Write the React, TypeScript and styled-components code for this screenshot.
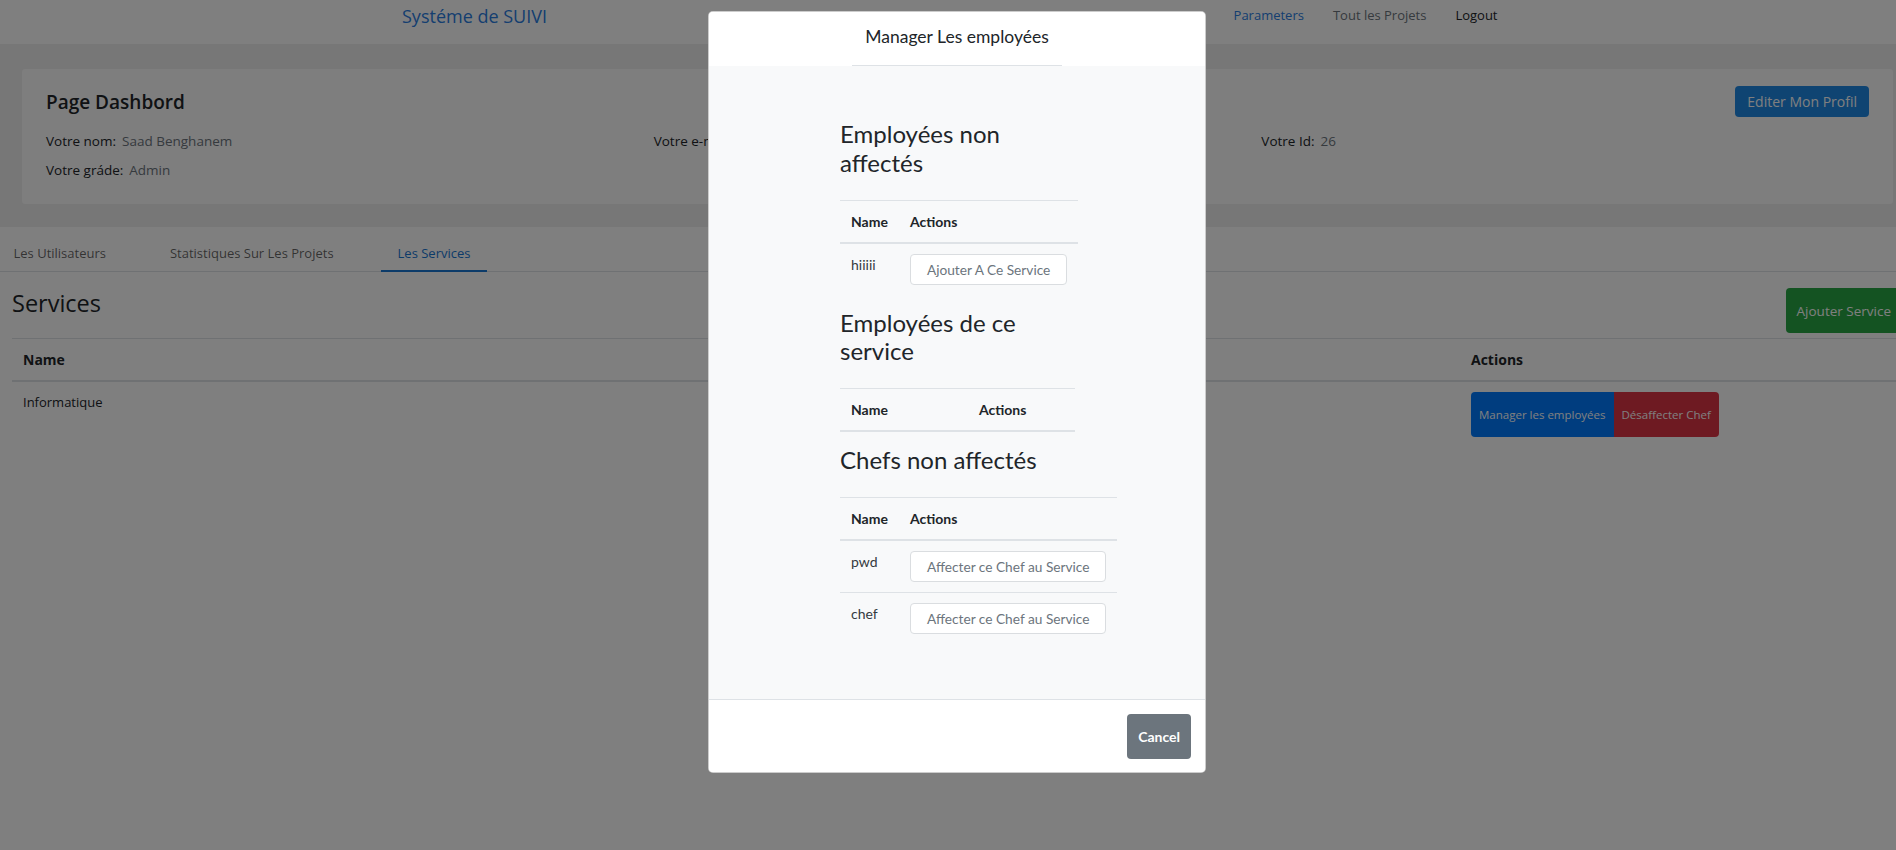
import styled, { createGlobalStyle } from "styled-components";

const GlobalStyle = createGlobalStyle`
  * { box-sizing: border-box; }
  html, body {
    margin: 0;
    padding: 0;
    overflow: hidden;
    background: #fff;
  }
  body {
    font-family: "Open Sans", "Noto Sans", sans-serif;
    color: #212529;
  }
`;

const Page = styled.div`
  width: 1914px;
  min-height: 850px;
  background: #fff;
`;

/* ---------- navbar ---------- */

const Navbar = styled.nav`
  height: 44px;
  background: #fff;
`;

const NavInner = styled.div`
  width: 1110px;
  margin: 0 auto;
  padding-top: 3px;
  display: flex;
  justify-content: space-between;
  align-items: flex-start;
`;

const Brand = styled.a`
  font-size: 18px;
  line-height: 26px;
  color: #2a7de1;
  text-decoration: none;
`;

const NavLinks = styled.div`
  display: flex;
`;

const NavLink = styled.a<{ $tone: "active" | "muted" | "dark" }>`
  padding: 0 14.5px;
  font-size: 13px;
  line-height: 24px;
  text-decoration: none;
  color: ${({ $tone }) =>
    $tone === "active" ? "#2a7de1" : $tone === "muted" ? "#6c757d" : "#212529"};
`;

/* ---------- profile card ---------- */

const Band = styled.section`
  background: #eeeeee;
  padding: 25px 21px 23px 22px;
`;

const Card = styled.div`
  background: #fcfcfc;
  border-radius: 3px;
  padding: 17px 24px 22px;
`;

const CardHeader = styled.div`
  height: 31px;
  display: flex;
  justify-content: space-between;
  align-items: center;
`;

const CardTitle = styled.h1`
  margin: 0;
  font-size: 19px;
  font-weight: 600;
  color: #212529;
`;

const ProfileButton = styled.button`
  height: 31px;
  padding: 0 12px;
  border: none;
  border-radius: 4px;
  background: #1e88e5;
  color: #fff;
  font-family: inherit;
  font-size: 14px;
`;

const InfoGrid = styled.div`
  margin-top: 12px;
  display: grid;
  grid-template-columns: repeat(3, 1fr);
  row-gap: 5px;
  font-size: 13.5px;
  line-height: 24px;
`;

const InfoLabel = styled.span`
  color: #212529;
`;

const InfoValue = styled.span`
  margin-left: 6px;
  color: #6c757d;
`;

/* ---------- tabs ---------- */

const TabList = styled.div`
  border-bottom: 1px solid #dee2e6;
`;

const TabRow = styled.div`
  display: flex;
  gap: 31px;
  margin-left: -3px;
`;

const Tab = styled.button<{ $active?: boolean }>`
  margin-bottom: -1px;
  padding: 16px 16.5px 7px;
  border: none;
  border-bottom: 2px solid ${({ $active }) => ($active ? "#1976d2" : "transparent")};
  background: none;
  font-family: inherit;
  font-size: 13px;
  line-height: 20px;
  color: ${({ $active }) => ($active ? "#1976d2" : "rgba(0,0,0,0.62)")};
`;

/* ---------- services ---------- */

const ServicesSection = styled.section`
  padding: 16px 12px 0;
`;

const SectionHead = styled.div`
  display: flex;
  justify-content: space-between;
  align-items: flex-start;
`;

const SectionTitle = styled.h2`
  margin: 0;
  font-size: 23.5px;
  font-weight: 400;
  line-height: 30px;
  color: #212529;
`;

const AddButton = styled.button`
  height: 45px;
  padding: 0 11px;
  border: none;
  border-radius: 4px;
  background: #28a745;
  color: #fff;
  font-family: inherit;
  font-size: 13.5px;
  white-space: nowrap;
`;

const DataTable = styled.table`
  width: 100%;
  margin-top: 5px;
  border-collapse: collapse;
  font-size: 13px;
`;

const HeadCell = styled.th<{ $w?: number }>`
  width: ${({ $w }) => ($w ? `${$w}px` : "auto")};
  padding: 10px 11px;
  line-height: 21px;
  text-align: left;
  font-size: 14px;
  font-weight: 700;
  border-top: 1px solid #dee2e6;
  border-bottom: 2px solid #dee2e6;
`;

const BodyCell = styled.td`
  padding: 10px 11px;
  line-height: 21px;
  vertical-align: top;
`;

const ButtonGroup = styled.div`
  display: inline-flex;
`;

const GroupButton = styled.button<{ $variant: "primary" | "danger" }>`
  height: 45px;
  padding: 0 8px;
  border: none;
  background: ${({ $variant }) => ($variant === "primary" ? "#007bff" : "#dc3545")};
  border-radius: ${({ $variant }) => ($variant === "primary" ? "4px 0 0 4px" : "0 4px 4px 0")};
  color: #fff;
  font-family: inherit;
  font-size: 11.5px;
  white-space: nowrap;
`;

/* ---------- modal ---------- */

const Backdrop = styled.div`
  position: fixed;
  top: 0;
  left: 0;
  width: 1914px;
  height: 100%;
  padding-top: 11px;
  background: rgba(0, 0, 0, 0.5);
  display: flex;
  justify-content: center;
  align-items: flex-start;
`;

const Dialog = styled.div`
  width: 498px;
  background: #fff;
  border: 1px solid rgba(0, 0, 0, 0.2);
  border-radius: 5px;
  overflow: hidden;
  font-family: Lato, "Open Sans", sans-serif;
  color: #212529;
`;

const ModalHeader = styled.div`
  padding-top: 13px;
  display: flex;
  justify-content: center;
  background: #fff;
`;

const ModalTitle = styled.h5`
  width: 210px;
  margin: 0;
  padding-bottom: 16px;
  border-bottom: 1px solid #dee2e6;
  text-align: center;
  font-size: 17.5px;
  font-weight: 400;
  line-height: 24px;
`;

const ModalBody = styled.div`
  padding: 54px 0 41px 6px;
  background: #f8f9fa;
  display: flex;
  justify-content: center;
`;

const Column = styled.div`
  width: 240px;
`;

const BlockTitle = styled.h2`
  margin: 0 0 22px;
  font-size: 24px;
  font-weight: 400;
  line-height: 1.2;
  color: #212529;
`;

const MiniTable = styled.table`
  margin-bottom: 14px;
  border-collapse: collapse;
  font-size: 14px;
`;

const MiniHead = styled.th<{ $w?: number }>`
  width: ${({ $w }) => ($w ? `${$w}px` : "auto")};
  padding: 10px 11px;
  line-height: 21px;
  text-align: left;
  font-weight: 700;
  border-top: 1px solid #dee2e6;
  border-bottom: 2px solid #dee2e6;
`;

const MiniCell = styled.td<{ $sep?: boolean }>`
  padding: 10px 11px;
  line-height: 21px;
  vertical-align: top;
  color: #343a40;
  border-top: ${({ $sep }) => ($sep ? "1px solid #dee2e6" : "none")};
`;

const LightButton = styled.button`
  height: 31px;
  padding: 0 16px;
  background: #fff;
  border: 1px solid #dadde0;
  border-radius: 4px;
  color: #6c757d;
  font-family: inherit;
  font-size: 13.7px;
  white-space: nowrap;
`;

const ModalFooter = styled.div`
  padding: 14px 14px 13px;
  border-top: 1px solid #dee2e6;
  background: #fff;
  display: flex;
  justify-content: flex-end;
`;

const CancelButton = styled.button`
  height: 45px;
  padding: 0 11px;
  border: none;
  border-radius: 4px;
  background: #6c757d;
  color: #fff;
  font-family: inherit;
  font-size: 14px;
  font-weight: 700;
`;

const unassigned = ["hiiiii"];
const chefs = ["pwd", "chef"];

export default function App() {
  return (
    <>
      <GlobalStyle />
      <Page>
        <Navbar>
          <NavInner>
            <Brand>Systéme de SUIVI</Brand>
            <NavLinks>
              <NavLink $tone="active">Parameters</NavLink>
              <NavLink $tone="muted">Tout les Projets</NavLink>
              <NavLink $tone="dark">Logout</NavLink>
            </NavLinks>
          </NavInner>
        </Navbar>

        <Band>
          <Card>
            <CardHeader>
              <CardTitle>Page Dashbord</CardTitle>
              <ProfileButton>Editer Mon Profil</ProfileButton>
            </CardHeader>
            <InfoGrid>
              <div>
                <InfoLabel>Votre nom:</InfoLabel>
                <InfoValue>Saad Benghanem</InfoValue>
              </div>
              <div>
                <InfoLabel>Votre e-mail:</InfoLabel>
                <InfoValue>saad@gmail.com</InfoValue>
              </div>
              <div>
                <InfoLabel>Votre Id:</InfoLabel>
                <InfoValue>26</InfoValue>
              </div>
              <div>
                <InfoLabel>Votre gráde:</InfoLabel>
                <InfoValue>Admin</InfoValue>
              </div>
            </InfoGrid>
          </Card>
        </Band>

        <TabList>
          <TabRow>
            <Tab>Les Utilisateurs</Tab>
            <Tab>Statistiques Sur Les Projets</Tab>
            <Tab $active>Les Services</Tab>
          </TabRow>
        </TabList>

        <ServicesSection>
          <SectionHead>
            <SectionTitle>Services</SectionTitle>
            <AddButton>Ajouter Service</AddButton>
          </SectionHead>
          <DataTable>
            <thead>
              <tr>
                <HeadCell $w={1448}>Name</HeadCell>
                <HeadCell>Actions</HeadCell>
              </tr>
            </thead>
            <tbody>
              <tr>
                <BodyCell>Informatique</BodyCell>
                <BodyCell>
                  <ButtonGroup>
                    <GroupButton $variant="primary">Manager les employées</GroupButton>
                    <GroupButton $variant="danger">Désaffecter Chef</GroupButton>
                  </ButtonGroup>
                </BodyCell>
              </tr>
            </tbody>
          </DataTable>
        </ServicesSection>
      </Page>

      <Backdrop>
        <Dialog>
          <ModalHeader>
            <ModalTitle>Manager Les employées</ModalTitle>
          </ModalHeader>
          <ModalBody>
            <Column>
              <BlockTitle>Employées non affectés</BlockTitle>
              <MiniTable>
                <thead>
                  <tr>
                    <MiniHead>Name</MiniHead>
                    <MiniHead>Actions</MiniHead>
                  </tr>
                </thead>
                <tbody>
                  {unassigned.map((name) => (
                    <tr key={name}>
                      <MiniCell>{name}</MiniCell>
                      <MiniCell>
                        <LightButton>Ajouter A Ce Service</LightButton>
                      </MiniCell>
                    </tr>
                  ))}
                </tbody>
              </MiniTable>

              <BlockTitle>Employées de ce service</BlockTitle>
              <MiniTable>
                <thead>
                  <tr>
                    <MiniHead $w={128}>Name</MiniHead>
                    <MiniHead $w={107}>Actions</MiniHead>
                  </tr>
                </thead>
              </MiniTable>

              <BlockTitle>Chefs non affectés</BlockTitle>
              <MiniTable>
                <thead>
                  <tr>
                    <MiniHead>Name</MiniHead>
                    <MiniHead>Actions</MiniHead>
                  </tr>
                </thead>
                <tbody>
                  {chefs.map((name, i) => (
                    <tr key={name}>
                      <MiniCell $sep={i > 0}>{name}</MiniCell>
                      <MiniCell $sep={i > 0}>
                        <LightButton>Affecter ce Chef au Service</LightButton>
                      </MiniCell>
                    </tr>
                  ))}
                </tbody>
              </MiniTable>
            </Column>
          </ModalBody>
          <ModalFooter>
            <CancelButton>Cancel</CancelButton>
          </ModalFooter>
        </Dialog>
      </Backdrop>
    </>
  );
}
